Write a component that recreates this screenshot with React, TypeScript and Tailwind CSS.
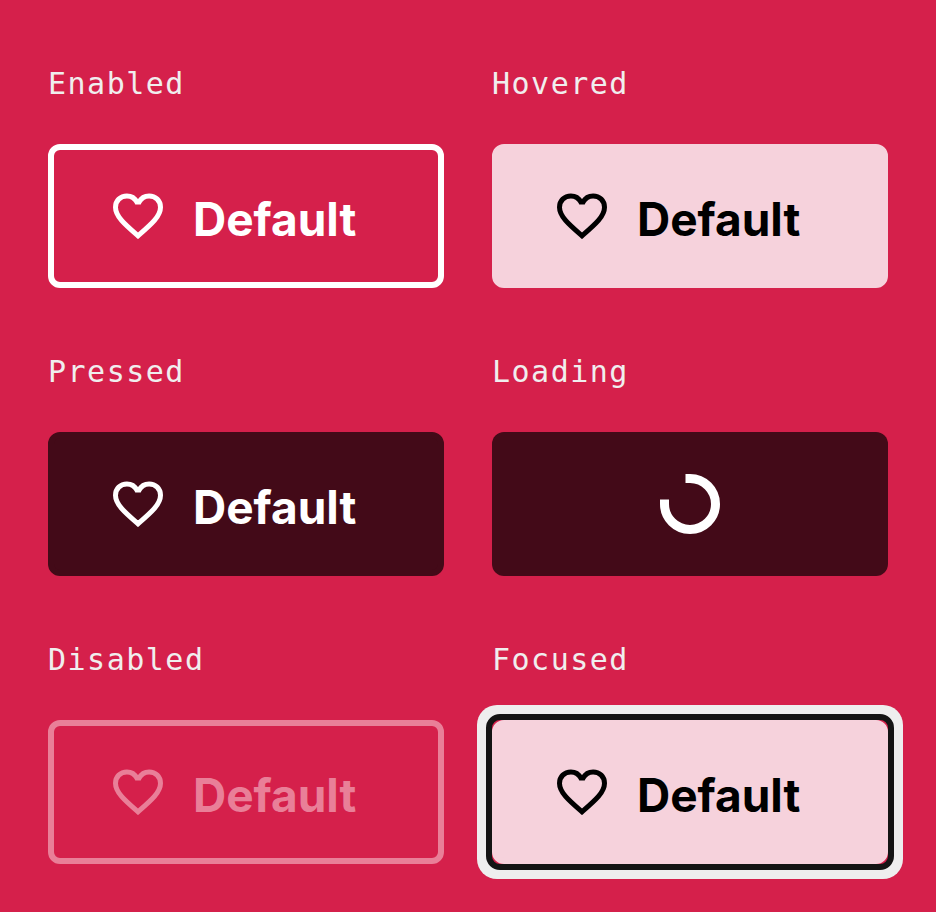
import React from "react";

type Tone = "enabled" | "hovered" | "pressed" | "disabled" | "focused";

const tones: Record<Tone, string> = {
  enabled: "border-white text-white",
  hovered: "border-[#f6d2dc] bg-[#f6d2dc] text-black",
  pressed: "border-[#430a18] bg-[#430a18] text-white",
  disabled: "border-[#e97f98] text-[#e97f98]",
  focused: "border-[#f6d2dc] bg-[#f6d2dc] text-black",
};

function Heart() {
  return (
    <svg viewBox="0 0 50 46" className="h-[46px] w-[50px] shrink-0" fill="none" stroke="currentColor" strokeWidth="5" aria-hidden="true">
      <path d="M25 42.8C12 31.5 2.5 23.5 2.5 14.2C2.5 7.7 7.4 2.9 13.9 2.9C18.3 2.9 22 5.4 23.8 9H26.2C28 5.4 31.7 2.9 36.1 2.9C42.6 2.9 47.5 7.7 47.5 14.2C47.5 23.5 38 31.5 25 42.8Z" />
    </svg>
  );
}

function Spinner() {
  return (
    <svg viewBox="0 0 60 60" className="size-[60px]" fill="none" stroke="currentColor" strokeWidth="9" aria-hidden="true">
      <path d="M25.5 4.5H30A25.5 25.5 0 1 1 4.5 30V25.5" />
    </svg>
  );
}

function DemoButton({ tone }: { tone: Tone }) {
  return (
    <button
      type="button"
      disabled={tone === "disabled"}
      className={`relative flex h-36 w-full items-center gap-[30px] rounded-xl border-6 pl-[59px] outline-none ${tones[tone]}`}
    >
      <Heart />
      <span className="pt-1.5 text-[46px] leading-12 font-bold">Default</span>
    </button>
  );
}

function Example({ label, children }: { label: string; children: React.ReactNode }) {
  return (
    <section>
      <h2 className="mb-10 pt-4 font-['Noto_Mono','Droid_Sans_Mono','DejaVu_Sans_Mono',monospace] text-[30px] leading-[40px] tracking-wider text-[#f0eeee]">
        {label}
      </h2>
      {children}
    </section>
  );
}

export default function App() {
  return (
    <main className="min-h-screen bg-[#d5204b] p-12 font-['Inter',sans-serif]">
      <div className="grid grid-cols-2 gap-12">
        <Example label="Enabled"><DemoButton tone="enabled" /></Example>
        <Example label="Hovered"><DemoButton tone="hovered" /></Example>
        <Example label="Pressed"><DemoButton tone="pressed" /></Example>
        <Example label="Loading">
          <button type="button" aria-label="Loading" className="flex h-36 w-full items-center justify-center rounded-xl bg-[#430a18] text-white">
            <Spinner />
          </button>
        </Example>
        <Example label="Disabled"><DemoButton tone="disabled" /></Example>
        <Example label="Focused">
          <div className="relative">
            <span className="absolute -inset-[15px] rounded-[20px] bg-[#eeeeee]" />
            <span className="absolute -inset-[6px] rounded-[14px] border-6 border-[#141414] bg-[#d5204b]" />
            <DemoButton tone="focused" />
          </div>
        </Example>
      </div>
    </main>
  );
}
